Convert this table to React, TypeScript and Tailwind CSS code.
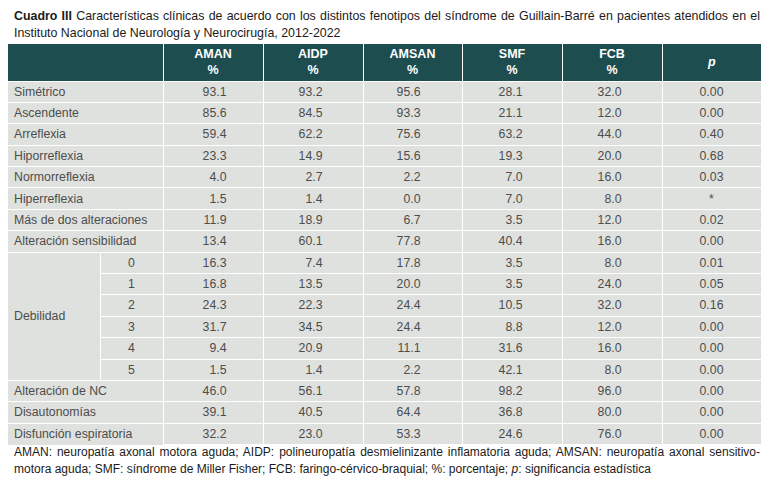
import React from "react";

const rowsA: [string, string[], string][] = [
  ["Simétrico", ["93.1", "93.2", "95.6", "28.1", "32.0"], "0.00"],
  ["Ascendente", ["85.6", "84.5", "93.3", "21.1", "12.0"], "0.00"],
  ["Arreflexia", ["59.4", "62.2", "75.6", "63.2", "44.0"], "0.40"],
  ["Hiporreflexia", ["23.3", "14.9", "15.6", "19.3", "20.0"], "0.68"],
  ["Normorreflexia", ["4.0", "2.7", "2.2", "7.0", "16.0"], "0.03"],
  ["Hiperreflexia", ["1.5", "1.4", "0.0", "7.0", "8.0"], "*"],
  ["Más de dos alteraciones", ["11.9", "18.9", "6.7", "3.5", "12.0"], "0.02"],
  ["Alteración sensibilidad", ["13.4", "60.1", "77.8", "40.4", "16.0"], "0.00"],
];

const deb: [string, string[], string][] = [
  ["0", ["16.3", "7.4", "17.8", "3.5", "8.0"], "0.01"],
  ["1", ["16.8", "13.5", "20.0", "3.5", "24.0"], "0.05"],
  ["2", ["24.3", "22.3", "24.4", "10.5", "32.0"], "0.16"],
  ["3", ["31.7", "34.5", "24.4", "8.8", "12.0"], "0.00"],
  ["4", ["9.4", "20.9", "11.1", "31.6", "16.0"], "0.00"],
  ["5", ["1.5", "1.4", "2.2", "42.1", "8.0"], "0.00"],
];

const rowsB: [string, string[], string][] = [
  ["Alteración de NC", ["46.0", "56.1", "57.8", "98.2", "96.0"], "0.00"],
  ["Disautonomías", ["39.1", "40.5", "64.4", "36.8", "80.0"], "0.00"],
  ["Disfunción espiratoria", ["32.2", "23.0", "53.3", "24.6", "76.0"], "0.00"],
];

const padCls = ["pr-[36px]", "pr-[40px]", "pr-[41px]", "pr-[39px]", "pr-[40px]"];

const td = "border border-white h-[21.4px] p-0 leading-none";

function Vals({ vals, p }: { vals: string[]; p: string }) {
  return (
    <>
      {vals.map((v, i) => (
        <td key={i} className={`${td} text-right ${padCls[i]}`}>
          {v}
        </td>
      ))}
      <td className={`${td} text-center`}>{p}</td>
    </>
  );
}

export default function App() {
  return (
    <div
      className="w-[770px] h-[490px] bg-white px-[8px] pt-[8px]"
      style={{ fontFamily: '"Liberation Sans", Arial, sans-serif' }}
    >
      <p className="text-[12.4px] leading-[17px] text-[#1b1b1b] pl-[6px] pr-[2px] text-justify mb-[2px]">
        <b>Cuadro III</b> Características clínicas de acuerdo con los distintos fenotipos del síndrome de
        Guillain-Barré en pacientes atendidos en el Instituto Nacional de Neurología y Neurocirugía,
        2012-2022
      </p>
      <table className="w-[753px] border-collapse table-fixed text-[12.3px] text-[#4d4d4d]">
        <colgroup>
          <col className="w-[92px]" />
          <col className="w-[63px]" />
          <col className="w-[100px]" />
          <col className="w-[100px]" />
          <col className="w-[99px]" />
          <col className="w-[100px]" />
          <col className="w-[100px]" />
          <col className="w-[99px]" />
        </colgroup>
        <thead>
          <tr className="bg-[#1d4d4f] text-white">
            <th colSpan={2} className="border border-white border-t-0 border-l-0 h-[37px] p-0"></th>
            {["AMAN", "AIDP", "AMSAN", "SMF", "FCB"].map((h) => (
              <th key={h} className="border border-white border-t-0 h-[37px] p-0 text-center leading-[16px] font-bold text-[12.5px]">
                {h}
                <br />%
              </th>
            ))}
            <th className="border border-white border-t-0 border-r-0 h-[37px] p-0 text-center italic font-bold text-[12.5px]">p</th>
          </tr>
        </thead>
        <tbody className="bg-[#dfe1de]">
          {rowsA.map(([l, v, p]) => (
            <tr key={l}>
              <td colSpan={2} className={`${td} border-l-0 pl-[6px] text-left`}>{l}</td>
              <Vals vals={v} p={p} />
            </tr>
          ))}
          {deb.map(([n, v, p], i) => (
            <tr key={n}>
              {i === 0 && (
                <td rowSpan={6} className={`${td} border-l-0 pl-[6px] text-left align-middle`}>
                  Debilidad
                </td>
              )}
              <td className={`${td} text-center`}>{n}</td>
              <Vals vals={v} p={p} />
            </tr>
          ))}
          {rowsB.map(([l, v, p]) => (
            <tr key={l}>
              <td colSpan={2} className={`${td} border-l-0 border-b-0 pl-[6px] text-left`}>{l}</td>
              <Vals vals={v} p={p} />
            </tr>
          ))}
        </tbody>
      </table>
      <p className="text-[12px] leading-[17px] text-[#1b1b1b] pl-[6px] pr-[2px] text-justify mt-[-1px]">
        AMAN: neuropatía axonal motora aguda; AIDP: polineuropatía desmielinizante inflamatoria aguda;
        AMSAN: neuropatía axonal sensitivo-motora aguda; SMF: síndrome de Miller Fisher; FCB:
        faringo-cérvico-braquial; %: porcentaje; <i>p</i>: significancia estadística
      </p>
    </div>
  );
}
